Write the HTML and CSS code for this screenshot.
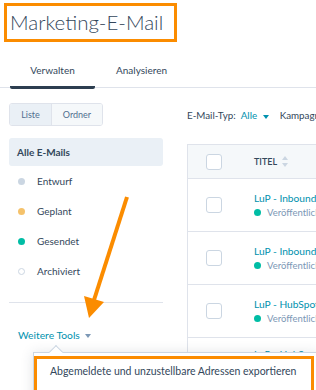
FILE: index.html
```html
<!DOCTYPE html>
<html lang="de">
<head>
    <meta charset="UTF-8">
    <meta name="viewport" content="width=device-width, initial-scale=1.0">
    <title>Marketing-E-Mail</title>
    <link rel="stylesheet" href="styles.css">
</head>
<body>

<div class="page">
    <header class="page-header">
        <h1 class="title">Marketing-E-Mail</h1>
    </header>

    <nav class="tabs">
        <a href="#" class="tab active">Verwalten</a>
        <a href="#" class="tab">Analysieren</a>
    </nav>

    <div class="main">
        <aside class="sidebar">
            <div class="toggle">
                <span class="toggle-btn selected">Liste</span>
                <span class="toggle-btn">Ordner</span>
            </div>

            <div class="nav-item current">Alle E-Mails</div>
            <div class="nav-item"><span class="dot draft"></span>Entwurf</div>
            <div class="nav-item"><span class="dot planned"></span>Geplant</div>
            <div class="nav-item"><span class="dot sent"></span>Gesendet</div>
            <div class="nav-item"><span class="dot archived"></span>Archiviert</div>

            <div class="divider"></div>

            <a href="#" class="more-tools">Weitere Tools <span class="caret"></span></a>
        </aside>

        <section class="content">
            <div class="filters">
                <span>E-Mail-Typ:</span>
                <a href="#" class="filter-value">Alle <span class="caret"></span></a>
                <span>Kampagne:</span>
                <a href="#" class="filter-value">Alle <span class="caret"></span></a>
            </div>

            <div class="table">
                <div class="row head">
                    <span class="checkbox"></span>
                    <span class="col-title">TITEL
                        <svg class="sort" width="6" height="11" viewBox="0 0 6 11">
                            <path d="M3 0 L6 4 H0 Z M3 11 L0 7 H6 Z" fill="#cbd6e2"/>
                        </svg>
                    </span>
                </div>
                <div class="row">
                    <span class="checkbox"></span>
                    <div class="cell">
                        <a href="#" class="email-name">LuP - Inbound Marketing Newsletter</a>
                        <span class="status"><span class="dot sent"></span>Veröffentlicht</span>
                    </div>
                </div>
                <div class="row">
                    <span class="checkbox"></span>
                    <div class="cell">
                        <a href="#" class="email-name">LuP - Inbound Marketing Webinar</a>
                        <span class="status"><span class="dot sent"></span>Veröffentlicht</span>
                    </div>
                </div>
                <div class="row">
                    <span class="checkbox"></span>
                    <div class="cell">
                        <a href="#" class="email-name">LuP - HubSpot Update</a>
                        <span class="status"><span class="dot sent"></span>Veröffentlicht</span>
                    </div>
                </div>
                <div class="row last">
                    <span class="checkbox"></span>
                    <div class="cell">
                        <a href="#" class="email-name">LuP - HubSpot Partner</a>
                    </div>
                </div>
            </div>
        </section>
    </div>

    <!-- annotation arrow pointing at "Weitere Tools" -->
    <svg class="annotation-arrow" width="316" height="390" viewBox="0 0 316 390">
        <line x1="127" y1="197" x2="94" y2="300" stroke="#fb8c00" stroke-width="4"/>
        <polygon points="84,296 104,302 89,318" fill="#fb8c00"/>
    </svg>

    <div class="dropdown">
        <div class="dropdown-item">Abgemeldete und unzustellbare Adressen exportieren</div>
    </div>
</div>

</body>
</html>
```

FILE: styles.css
```css
body {
    margin: 0;
    font-family: Lato, "Open Sans", Arial, sans-serif;
    color: #33475b;
    background: #fff;
    overflow: hidden;
}
a {
    text-decoration: none;
}
.page {
    position: relative;
    width: 316px;
    height: 390px;
    overflow: hidden;
}
.page-header {
    padding: 3px 0 0 4px;
}
.title {
    display: inline-block;
    margin: 0;
    padding: 0 11px 0 3px;
    border: 3px solid #fb8c00;
    font-size: 20.5px;
    font-weight: 300;
    line-height: 33px;
    color: #33475b;
}
.tabs {
    display: flex;
    gap: 4px;
    align-items: flex-end;
    padding-left: 10px;
    border-bottom: 1px solid #dfe3eb;
}
.tab {
    width: 85px;
    padding: 21px 0 9px;
    margin-bottom: -2px;
    text-align: center;
    font-size: 10px;
    line-height: 14px;
    color: #33475b;
    border-bottom: 3px solid transparent;
}
.tab.active {
    border-bottom-color: #2d3e50;
    border-radius: 2px;
}
.main {
    display: flex;
    gap: 24px;
}
.sidebar {
    width: 154px;
    flex: none;
    margin-left: 9px;
    padding-top: 15px;
}
.toggle {
    display: flex;
    width: 94px;
    height: 23px;
    box-sizing: border-box;
    border: 1px solid #dfe3eb;
    border-radius: 3px;
    overflow: hidden;
}
.toggle-btn {
    flex: 1;
    text-align: center;
    font-size: 9px;
    line-height: 21px;
    background: #f5f8fa;
    color: #516f90;
}
.toggle-btn.selected {
    flex: none;
    width: 41px;
    background: #eaf0f6;
    border-right: 1px solid #dfe3eb;
}
.nav-item {
    display: flex;
    align-items: center;
    height: 30px;
    padding-left: 8px;
    font-size: 10px;
    color: #33475b;
}
.nav-item.current {
    margin-top: 12px;
    height: 28px;
    background: #eaf0f6;
    border-radius: 3px;
    font-weight: 700;
}
.dot {
    display: inline-block;
    width: 7px;
    height: 7px;
    border-radius: 50%;
    box-sizing: border-box;
}
.nav-item .dot {
    margin: 0 12px 0 1px;
}
.dot.draft {
    background: #cbd6e2;
}
.dot.planned {
    background: #f5c26b;
}
.dot.sent {
    background: #00bda5;
}
.dot.archived {
    border: 1.5px solid #cbd6e2;
}
.divider {
    margin-top: 16px;
    border-top: 1px solid #dfe3eb;
}
.more-tools {
    display: inline-block;
    margin: 26px 0 0 9px;
    font-size: 10.3px;
    color: #0091ae;
}
.caret {
    display: inline-block;
    margin-left: 3px;
    vertical-align: middle;
    border-left: 3.5px solid transparent;
    border-right: 3.5px solid transparent;
    border-top: 4px solid #7c98b6;
}
.content {
    flex: 1;
    min-width: 0;
}
.filters {
    display: flex;
    gap: 5px;
    margin-top: 19px;
    white-space: nowrap;
    font-size: 9.8px;
    line-height: 16px;
}
.filter-value {
    color: #0091ae;
    margin-right: 6px;
}
.filter-value .caret {
    border-top-color: #0091ae;
    margin-left: 3px;
}
.table {
    width: 260px;
    margin-top: 21px;
    border: 1px solid #dfe3eb;
}
.row {
    display: flex;
    align-items: center;
    height: 52px;
    border-top: 1px solid #dfe3eb;
    white-space: nowrap;
}
.row.head {
    height: 33px;
    border-top: none;
    background: #f5f8fa;
}
.row.last {
    align-items: flex-start;
    padding-top: 9px;
    box-sizing: border-box;
}
.row.last .checkbox {
    margin-top: 20px;
}
.checkbox {
    flex: none;
    width: 14px;
    height: 14px;
    margin: 0 32px 0 18px;
    border: 1px solid #cbd6e2;
    border-radius: 3px;
    background: #fff;
}
.col-title {
    display: flex;
    align-items: center;
    gap: 5px;
    font-size: 9px;
    font-weight: 600;
    color: #33475b;
}
.cell {
    display: flex;
    flex-direction: column;
    gap: 1px;
}
.email-name {
    font-size: 10.2px;
    line-height: 14px;
    color: #0091ae;
}
.status {
    display: flex;
    align-items: center;
    font-size: 9.5px;
    line-height: 14px;
    color: #7c98b6;
}
.status .dot {
    margin-right: 6px;
}
.annotation-arrow {
    position: absolute;
    left: 0;
    top: 0;
    pointer-events: none;
}
.dropdown {
    position: absolute;
    left: 33px;
    top: 352px;
    width: 283px;
    height: 50px;
    background: #fff;
    border: 1px solid #cbd6e2;
    box-shadow: 0 1px 12px rgba(45, 62, 80, 0.15);
}
.dropdown::before {
    content: "";
    position: absolute;
    left: 17px;
    top: -6px;
    width: 9px;
    height: 9px;
    background: #fff;
    border-left: 1px solid #cbd6e2;
    border-top: 1px solid #cbd6e2;
    transform: rotate(45deg);
}
.dropdown-item {
    position: relative;
    margin-top: 3px;
    width: 280px;
    height: 40px;
    padding: 5px 0 0 13px;
    box-sizing: border-box;
    border: 3px solid #fb8c00;
    font-size: 10.5px;
    line-height: 14px;
    white-space: nowrap;
    color: #33475b;
}
```
